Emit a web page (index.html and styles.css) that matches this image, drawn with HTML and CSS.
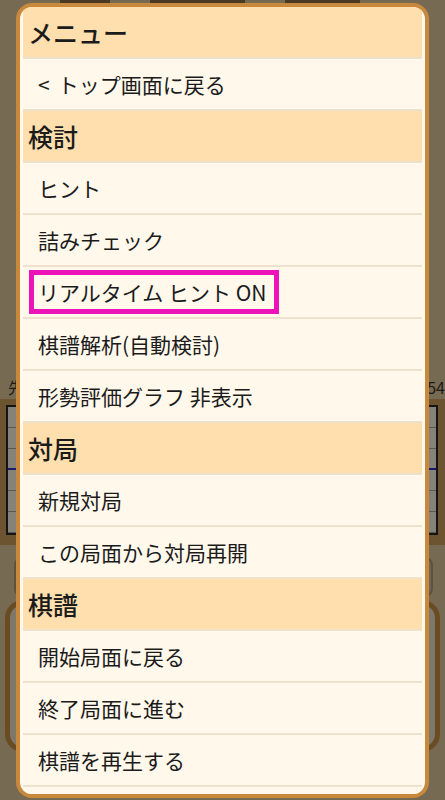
FILE: index.html
```html
<!DOCTYPE html>
<html lang="ja">
<head>
<meta charset="utf-8">
<title>メニュー</title>
<link rel="stylesheet" href="styles.css">
</head>
<body>
<div class="app">
  <div class="topbar">
    <span class="tb tb1"></span><span class="tb tb2"></span><span class="tb tb3"></span>
  </div>
  <div class="spacer1"></div>
  <div class="players"><span>先</span><span>54</span></div>
  <div class="board">
    <div class="grid">
      <div class="gl"></div><div class="gl"></div><div class="gl mark"></div><div class="gl"></div><div class="gl"></div><div class="gl"></div>
    </div>
  </div>
  <div class="btnrow"><div class="btn"></div><div class="btn"></div></div>
  <div class="panel"></div>
</div>

<div class="overlay">
  <div class="dialog">
    <div class="list">
      <div class="row head">メニュー</div>
      <div class="row item"><span class="lt">&lt;</span>トップ画面に戻る</div>
      <div class="row head">検討</div>
      <div class="row item">ヒント</div>
      <div class="row item">詰みチェック</div>
      <div class="row item"><span class="hl">リアルタイム ヒント ON</span></div>
      <div class="row item">棋譜解析(自動検討)</div>
      <div class="row item">形勢評価グラフ 非表示</div>
      <div class="row head">対局</div>
      <div class="row item">新規対局</div>
      <div class="row item">この局面から対局再開</div>
      <div class="row head">棋譜</div>
      <div class="row item">開始局面に戻る</div>
      <div class="row item">終了局面に進む</div>
      <div class="row item">棋譜を再生する</div>
      <div class="row item"></div>
    </div>
  </div>
</div>
</body>
</html>
```

FILE: styles.css
```css
html, body {
  margin: 0;
  padding: 0;
}
body {
  width: 445px;
  height: 800px;
  overflow: hidden;
  position: relative;
  background: #776a53;
  font-family: "Noto Sans CJK JP", "Noto Sans", sans-serif;
  color: #1b1b1b;
}

/* background app (dimmed) */
.app {
  height: 800px;
  display: flex;
  flex-direction: column;
}
.topbar {
  height: 4px;
  display: flex;
  gap: 40px;
  padding-left: 60px;
}
.tb {
  height: 3px;
  background: #4a3a22;
}
.tb1 { width: 50px; }
.tb2 { width: 95px; }
.tb3 { width: 75px; }
.spacer1 { height: 371px; }
.players {
  height: 24px;
  display: flex;
  justify-content: space-between;
  padding: 0 0 0 8px;
  font-size: 16px;
  line-height: 24px;
  color: #1d1a14;
}
.board {
  height: 146px;
  background: #6d5430;
  padding: 6px 7px 10px 6px;
  box-sizing: border-box;
  display: flex;
}
.grid {
  flex: 1;
  background: #85827a;
  border: 2px solid #151515;
  display: flex;
  flex-direction: column;
}
.gl {
  flex: 1;
  border-bottom: 1px solid #5a5850;
}
.gl.mark { border-bottom: 2px solid #1a1a6a; }
.btnrow {
  height: 55px;
  display: flex;
  justify-content: space-between;
  padding: 12px 12px 0 14px;
  box-sizing: border-box;
}
.btn {
  width: 40px;
  height: 36px;
  border-radius: 8px;
  background: #6f6553;
  border: 2px solid #5d5240;
}
.panel {
  height: 142px;
  margin: 0 5px 0 5px;
  border: 5px solid #6a4c22;
  border-radius: 18px;
  background: #7e786b;
}

/* overlay dialog */
.overlay {
  position: absolute;
  inset: 0;
}
.dialog {
  position: absolute;
  left: 16px;
  top: 3px;
  width: 413px;
  height: 795px;
  box-sizing: border-box;
  border: 4px solid #c8893d;
  border-radius: 16px;
  background: #fff8ec;
  padding: 0 3px;
  overflow: hidden;
}
.list {
  display: flex;
  flex-direction: column;
}
.row {
  flex: none;
  height: 50px;
  border-bottom: 2px solid #efe2cc;
  display: flex;
  align-items: center;
  white-space: nowrap;
}
.head {
  background: #ffdfad;
  font-size: 25px;
  font-weight: 500;
  padding-left: 5px;
}
.item {
  background: #fff8eb;
  font-size: 21px;
  padding-left: 15px;
}
.lt {
  margin-right: 8px;
}
.hl {
  display: inline-block;
  margin-left: -9px;
  padding: 0 7px 0 4px;
  border: 5px solid #ec14b8;
  line-height: 34px;
}
```
